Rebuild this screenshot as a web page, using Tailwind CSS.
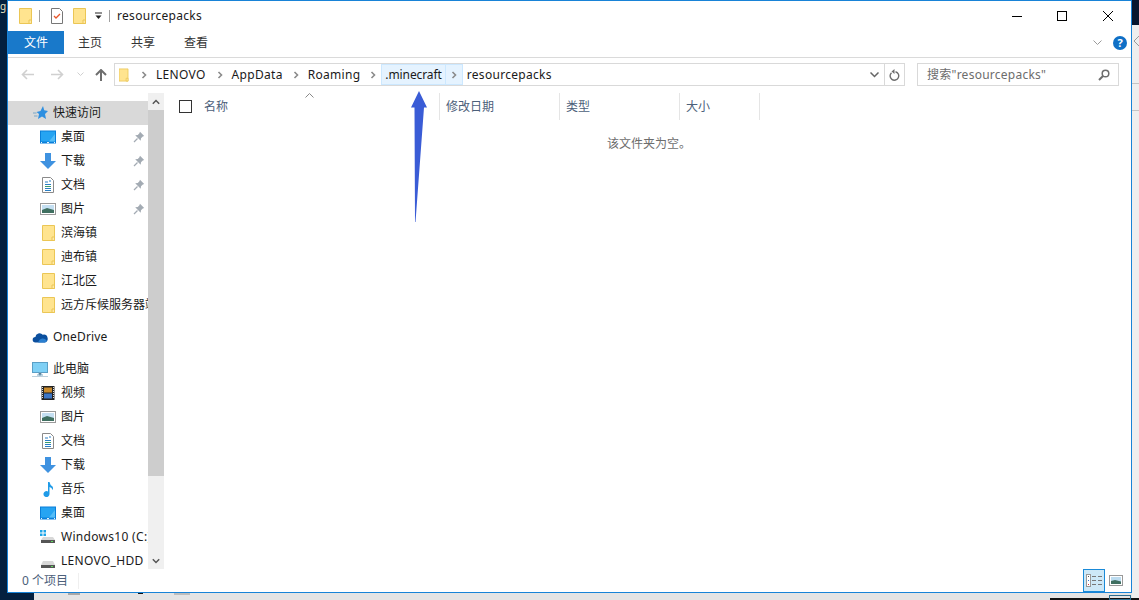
<!DOCTYPE html>
<html lang="zh-CN">
<head>
<meta charset="UTF-8">
<title>resourcepacks</title>
<script src="https://cdn.jsdelivr.net/npm/@tailwindcss/browser@4"></script>
</head>
<body class="relative w-[1139px] h-[600px] overflow-hidden bg-[#e4e4e4] font-['Noto_Sans','Noto_Sans_CJK_SC',sans-serif] text-[12px] leading-none text-[#1a1a1a]">

<svg class="hidden">
  <defs>
    <symbol id="folder" viewBox="0 0 16 16"><path d="M2.500.5h12v15h-12z" fill="#ffe48f" stroke="#ebc655"/><path d="M12 12h2.500v3.500H12z" fill="#ffe9a8" stroke="#ebc655"/></symbol>
    <symbol id="desk" viewBox="0 0 16 16"><rect x="0" y="1.500" width="16" height="13" fill="#0a7fd9"/><rect x="1" y="2.500" width="14" height="10" fill="#26a4f2"/><path d="M9 12.500 15 5v7.500z" fill="#55bdf7"/><path d="M1 13.600h1M7 13.600h2M14 13.600h1" stroke="#fff"/></symbol>
    <symbol id="down" viewBox="0 0 16 16"><path d="M5 0h6v8h5l-8 8-8-8h5z" fill="#3f92e0"/></symbol>
    <symbol id="doc" viewBox="0 0 16 16"><path d="M2.500.5h8l3 3v12h-11z" fill="#fff" stroke="#8a8a8a"/><path d="M5 5h3M9 4h2M5 7.500h6M5 11.500h6M5 13.500h6" stroke="#2a7fc4"/><path d="M5 9.500h6" stroke="#3d9d6a"/></symbol>
    <symbol id="pic" viewBox="0 0 16 16"><rect x=".5" y="2.500" width="15" height="11" fill="#fff" stroke="#9a9a9a"/><rect x="2" y="4" width="12" height="8" fill="#c4dff2"/><path d="M2 9l5-2 7 2v3H2z" fill="#3f6f60"/></symbol>
    <symbol id="pin" viewBox="0 0 12 12"><path d="M7 .8 11.200 5 9.800 5.600 8 7.200 7.700 9.800 2.200 4.300 4.800 4 6.400 2.200z" fill="#a3abb3"/><path d="M4.500 7.500 1 11" stroke="#a3abb3" stroke-width="1.300"/></symbol>
    <symbol id="drive" viewBox="0 0 16 16"><path d="M3 8h10l2 4v3H1v-3z" fill="#d8d8d8"/><rect x="1" y="12" width="14" height="3" fill="#555"/><rect x="11" y="13" width="2" height="1" fill="#5fdc5f"/></symbol>
    <symbol id="chev" viewBox="0 0 6 8"><path d="M1.500 1 4.500 4 1.500 7" fill="none" stroke="#8a8a8a" stroke-width="1.600"/></symbol>
  </defs>
</svg>

<!-- desktop behind the window -->
<div class="absolute left-0 top-0 w-[7px] h-[600px] bg-[#03203f]"></div>
<div class="absolute left-0 top-[593px] w-[34px] h-[7px] bg-[#03203f]"></div>
<div class="absolute left-0 top-[1px] text-[10px] text-[#e8e0c0]">g</div>
<div class="absolute left-[68px] top-[593px] w-[12px] h-[2px] bg-[#a8a8a8]"></div>
<div class="absolute left-[138px] top-[593px] w-[5px] h-[1px] bg-[#111]"></div>
<div class="absolute left-[174px] top-[593px] w-[16px] h-[2px] bg-[#bdbdbd]"></div>
<div class="absolute left-[1132px] top-0 w-[7px] h-[25px] bg-[#07162e]"></div>
<div class="absolute left-[1132px] top-[25px] w-[7px] h-[575px] bg-[#eeeeee]"></div>
<svg class="absolute left-[1132px] top-[36px] w-[7px] h-[10px]" viewBox="0 0 7 10"><path d="M7 0 2 5l5 5" fill="none" stroke="#9a9a9a"/></svg>
<div class="absolute left-[1132px] top-[83px] w-[7px] h-px bg-[#c4c4c4]"></div>
<div class="absolute left-[1132px] top-[110px] w-[7px] h-px bg-[#c4c4c4]"></div>
<div class="absolute left-[1050px] top-[598px] w-[89px] h-[2px] bg-[#111]"></div>
<div class="absolute left-[1109px] top-[595px] w-[22px] h-[5px] border border-[#2d6d8f]"></div>

<!-- explorer window -->
<div class="absolute left-[7px] top-0 w-[1125px] h-[593px] bg-white border border-[#1883d7] flex flex-col">

  <!-- title bar -->
  <div class="h-[30px] flex items-center shrink-0">
    <svg class="ml-[9px] w-4 h-4"><use href="#folder"/></svg>
    <div class="ml-[6px] w-px h-3 bg-[#a0a0a0]"></div>
    <svg class="ml-[10px] w-[14px] h-[16px]" viewBox="0 0 14 16"><path d="M1.500.5h8l3 3v12h-11z" fill="#fff" stroke="#777"/><path d="M4 8l2 2 4-4" fill="none" stroke="#e8562a" stroke-width="1.300"/></svg>
    <svg class="ml-[7px] w-4 h-4"><use href="#folder"/></svg>
    <svg class="ml-[7px] w-[9px] h-[8px]" viewBox="0 0 9 8"><path d="M1 1h7" stroke="#222"/><path d="M1.500 3.500h6L4.500 7z" fill="#222"/></svg>
    <div class="ml-[6px] w-px h-3 bg-[#a0a0a0]"></div>
    <span class="ml-[7px] tracking-[0.3px]">resourcepacks</span>
    <div class="ml-auto flex items-center">
      <svg class="w-[10px] h-[10px] mr-[35px]" viewBox="0 0 10 10"><path d="M0 5.500h10" stroke="#000"/></svg>
      <svg class="w-[10px] h-[10px] mr-[36px]" viewBox="0 0 10 10"><rect x=".5" y=".5" width="9" height="9" fill="none" stroke="#000"/></svg>
      <svg class="w-[10px] h-[10px] mr-[18px]" viewBox="0 0 10 10"><path d="M0 0l10 10M10 0 0 10" stroke="#000"/></svg>
    </div>
  </div>

  <!-- ribbon tabs -->
  <div class="h-[27px] shrink-0 border-b border-[#dadada] flex items-start">
    <div class="w-[56px] h-[23px] bg-[#1979ca] text-white flex items-center justify-center">文件</div>
    <div class="h-[23px] flex items-center ml-[14px] text-[#333]">主页</div>
    <div class="h-[23px] flex items-center ml-[29px] text-[#333]">共享</div>
    <div class="h-[23px] flex items-center ml-[29px] text-[#333]">查看</div>
    <div class="ml-auto h-[23px] flex items-center">
      <svg class="w-[9px] h-[6px] mr-[11px]" viewBox="0 0 9 6"><path d="M.5.500 4.500 4.500 8.500.5" fill="none" stroke="#9a9a9a"/></svg>
      <div class="w-[14px] h-[14px] mr-[4px] rounded-full bg-[#0f6fc6] text-white text-[11px] font-bold flex items-center justify-center">?</div>
    </div>
  </div>

  <!-- address row -->
  <div class="h-[33px] mb-[2px] shrink-0 flex items-center">
    <svg class="ml-[13px] w-[13px] h-[11px]" viewBox="0 0 13 11"><path d="M6 1 1.500 5.500 6 10M1.500 5.500H13" fill="none" stroke="#d0d0d0" stroke-width="1.600"/></svg>
    <svg class="ml-[17px] w-[13px] h-[11px]" viewBox="0 0 13 11"><path d="M7 1l4.500 4.500L7 10M11.500 5.500H0" fill="none" stroke="#d0d0d0" stroke-width="1.600"/></svg>
    <svg class="ml-[13px] w-[7px] h-[5px]" viewBox="0 0 7 5"><path d="M.5.500 3.500 3.500 6.500.5" fill="none" stroke="#d0d0d0"/></svg>
    <svg class="ml-[11px] w-[12px] h-[12px]" viewBox="0 0 12 12"><path d="M1 6l5-5 5 5M6 1v11" fill="none" stroke="#6e6e6e" stroke-width="2"/></svg>
    <div class="ml-[7px] w-[791px] h-[23px] border border-[#d9d9d9] flex items-center tracking-[0.3px]">
      <svg class="ml-[4px] w-[12px] h-[16px]" viewBox="2 0 13 16" preserveAspectRatio="none"><use href="#folder"/></svg>
      <svg class="ml-[10px] w-[6px] h-[8px]"><use href="#chev"/></svg>
      <span class="ml-[9px]">LENOVO</span>
      <svg class="ml-[11px] w-[6px] h-[8px]"><use href="#chev"/></svg>
      <span class="ml-[9px]">AppData</span>
      <svg class="ml-[10px] w-[6px] h-[8px]"><use href="#chev"/></svg>
      <span class="ml-[9px]">Roaming</span>
      <svg class="ml-[10px] w-[6px] h-[8px]"><use href="#chev"/></svg>
      <div class="ml-[5px] h-[21px] bg-[#e5f3ff] border border-[#cce8ff] flex items-center">
        <span class="px-[3px] tracking-[-0.1px]">.minecraft</span>
        <div class="h-full w-[17px] border-l border-[#cce8ff] flex items-center justify-center"><svg class="w-[6px] h-[8px]"><use href="#chev"/></svg></div>
      </div>
      <span class="ml-[4px]">resourcepacks</span>
      <svg class="ml-auto mr-[5px] w-[9px] h-[6px]" viewBox="0 0 9 6"><path d="M.5.500 4.500 4.500 8.500.5" fill="none" stroke="#666" stroke-width="1.500"/></svg>
      <div class="h-full w-[20px] border-l border-[#d9d9d9] flex items-center justify-center">
        <svg class="w-[11px] h-[12px]" viewBox="0 0 11 12"><path d="M6.500 2.700a4.300 4.300 0 1 1-4 1" fill="none" stroke="#6e6e6e" stroke-width="1.400"/><path d="M5.500 0v5L2.500 2.500z" fill="#6e6e6e"/></svg>
      </div>
    </div>
    <div class="ml-[12px] w-[202px] h-[23px] border border-[#d9d9d9] flex items-center">
      <span class="ml-[9px] text-[#6d6d6d] tracking-[0.25px]">搜索"resourcepacks"</span>
      <svg class="ml-auto mr-[8px] w-[12px] h-[12px]" viewBox="0 0 12 12"><circle cx="7.500" cy="4.500" r="3.300" fill="none" stroke="#6e6e6e" stroke-width="1.500"/><path d="M5 7 1 11" stroke="#6e6e6e" stroke-width="2"/></svg>
    </div>
  </div>

  <!-- navigation pane + file list -->
  <div class="flex-1 min-h-0 flex">
    <div class="w-[140px] shrink-0 pt-2 overflow-hidden whitespace-nowrap">
      <div class="h-6 flex items-center pl-[25px] bg-[#d9d9d9]">
        <svg class="w-[15px] h-[14px]" viewBox="0 0 15 14"><path d="M10 0l1.200 4.300L15 5l-3 3 1 5-4-2.500L5 13l1-5-2.500-2 4-1z" fill="#2e8fe0"/><path d="M0 7h3.500M1 10h3.500" stroke="#7aa7c7"/></svg>
        <span class="ml-[5px]">快速访问</span>
      </div>
      <div class="h-6 flex items-center pl-[32px]"><svg class="w-4 h-4"><use href="#desk"/></svg><span class="ml-[5px]">桌面</span><svg class="ml-auto mr-[3px] w-3 h-3"><use href="#pin"/></svg></div>
      <div class="h-6 flex items-center pl-[32px]"><svg class="w-4 h-4"><use href="#down"/></svg><span class="ml-[5px]">下载</span><svg class="ml-auto mr-[3px] w-3 h-3"><use href="#pin"/></svg></div>
      <div class="h-6 flex items-center pl-[32px]"><svg class="w-4 h-4"><use href="#doc"/></svg><span class="ml-[5px]">文档</span><svg class="ml-auto mr-[3px] w-3 h-3"><use href="#pin"/></svg></div>
      <div class="h-6 flex items-center pl-[32px]"><svg class="w-4 h-4"><use href="#pic"/></svg><span class="ml-[5px]">图片</span><svg class="ml-auto mr-[3px] w-3 h-3"><use href="#pin"/></svg></div>
      <div class="h-6 flex items-center pl-[32px]"><svg class="w-4 h-4"><use href="#folder"/></svg><span class="ml-[5px]">滨海镇</span></div>
      <div class="h-6 flex items-center pl-[32px]"><svg class="w-4 h-4"><use href="#folder"/></svg><span class="ml-[5px]">迪布镇</span></div>
      <div class="h-6 flex items-center pl-[32px]"><svg class="w-4 h-4"><use href="#folder"/></svg><span class="ml-[5px]">江北区</span></div>
      <div class="h-6 flex items-center pl-[32px]"><svg class="w-4 h-4 shrink-0"><use href="#folder"/></svg><span class="ml-[5px]">远方斥候服务器端</span></div>

      <div class="h-6 mt-2 flex items-center pl-[24px]">
        <svg class="w-4 h-[11px]" viewBox="0 0 16 12"><path d="M3 11.500a3 3 0 0 1 0-6 4.500 4.500 0 0 1 8-2.500 3.500 3.500 0 0 1 2 8.500z" fill="#0b4f9e"/><path d="M6 11.500q1-4 4.500-4.500 3-.3 5 2.500-.2 2-2 2z" fill="#2a7fd0"/></svg>
        <span class="ml-[5px] tracking-[0.15px]">OneDrive</span>
      </div>

      <div class="h-6 mt-2 flex items-center pl-[24px]">
        <svg class="w-4 h-4" viewBox="0 0 16 16"><rect x=".5" y="1.500" width="15" height="10" fill="#7fd0f5" stroke="#5a9fc6"/><path d="M5 14h6M7 12h2v2H7z" stroke="#7fa9c4"/><path d="M0 15.500h16" stroke="#bcd0dc"/></svg>
        <span class="ml-[5px]">此电脑</span>
      </div>
      <div class="h-6 flex items-center pl-[32px]"><svg class="w-4 h-4" viewBox="0 0 16 16"><rect x="1.500" y="1" width="13" height="14" fill="#222"/><rect x="4" y="2.500" width="8" height="5" fill="#c98a2c"/><rect x="4" y="8.500" width="8" height="5" fill="#3c75c4"/><path d="M2.500 2v12M13.500 2v12" stroke="#ddd" stroke-dasharray="1 1"/></svg><span class="ml-[5px]">视频</span></div>
      <div class="h-6 flex items-center pl-[32px]"><svg class="w-4 h-4"><use href="#pic"/></svg><span class="ml-[5px]">图片</span></div>
      <div class="h-6 flex items-center pl-[32px]"><svg class="w-4 h-4"><use href="#doc"/></svg><span class="ml-[5px]">文档</span></div>
      <div class="h-6 flex items-center pl-[32px]"><svg class="w-4 h-4"><use href="#down"/></svg><span class="ml-[5px]">下载</span></div>
      <div class="h-6 flex items-center pl-[32px]"><svg class="w-4 h-4" viewBox="0 0 16 16"><path d="M8 1h1.500q.5 3 3 4.500 1 1.500 0 3.500-.5-2.500-3-3V13a3 3 0 1 1-1.500-2.500z" fill="#1f9be8"/></svg><span class="ml-[5px]">音乐</span></div>
      <div class="h-6 flex items-center pl-[32px]"><svg class="w-4 h-4"><use href="#desk"/></svg><span class="ml-[5px]">桌面</span></div>
      <div class="h-6 flex items-center pl-[32px]"><svg class="w-4 h-4 shrink-0" viewBox="0 0 16 16"><path d="M0 1h2.500v2.500H0zM3.500 1H6v2.500H3.500zM0 4.500h2.500V7H0zM3.500 4.500H6V7H3.500z" fill="#1fa5e8"/><path d="M3 8h10l2 3v3H1v-3z" fill="#d8d8d8"/><rect x="1" y="11" width="14" height="3" fill="#555"/><rect x="11" y="12" width="2" height="1" fill="#5fdc5f"/></svg><span class="ml-[5px] tracking-[0.3px]">Windows10 (C:)</span></div>
      <div class="h-6 flex items-center pl-[32px]"><svg class="w-4 h-4 shrink-0"><use href="#drive"/></svg><span class="ml-[5px] tracking-[0.3px]">LENOVO_HDD</span></div>
    </div>

    <!-- nav scrollbar -->
    <div class="w-[16px] shrink-0 bg-[#f0f0f0] flex flex-col">
      <div class="h-[17px] flex items-center justify-center"><svg class="w-[8px] h-[6px]" viewBox="0 0 8 6"><path d="M.8 4.800 4 1.500l3.200 3.300" fill="none" stroke="#555" stroke-width="1.500"/></svg></div>
      <div class="h-[366px] bg-[#cdcdcd]"></div>
      <div class="flex-1 flex items-end justify-center pb-[5px]"><svg class="w-[8px] h-[6px]" viewBox="0 0 8 6"><path d="M.8 1.200 4 4.500l3.200-3.300" fill="none" stroke="#555" stroke-width="1.500"/></svg></div>
    </div>

    <!-- file list -->
    <div class="flex-1 min-w-0 flex flex-col">
      <div class="h-[27px] flex text-[#4c607a] shrink-0">
        <div class="relative w-[276px] flex items-center pl-[15px] border-r border-[#e5e5e5]">
          <div class="w-[13px] h-[13px] border border-[#333] bg-white"></div>
          <span class="ml-[12px]">名称</span>
          <svg class="absolute left-[141px] top-0 w-[9px] h-[5px]" viewBox="0 0 9 5"><path d="M.5 4.500l4-4 4 4" fill="none" stroke="#888"/></svg>
        </div>
        <div class="w-[120px] flex items-center pl-[6px] border-r border-[#e5e5e5]">修改日期</div>
        <div class="w-[120px] flex items-center pl-[6px] border-r border-[#e5e5e5]">类型</div>
        <div class="w-[80px] flex items-center pl-[6px] border-r border-[#e5e5e5]">大小</div>
      </div>
      <div class="pt-[18px] pl-[443px] text-[#6d6d6d]">该文件夹为空。</div>
    </div>
  </div>

  <!-- status bar -->
  <div class="h-[23px] shrink-0 flex items-center text-[#4c607a]">
    <span class="ml-[14px]">0 个项目</span>
    <div class="ml-[10px] w-px h-[16px] bg-[#efefef]"></div>
    <div class="ml-auto w-[22px] h-[23px] bg-[#cde8f7] border border-[#1a8ad8] flex items-center justify-center">
      <svg class="w-[16px] h-[13px]" viewBox="0 0 16 13"><rect x=".5" y=".5" width="4" height="12" fill="#fff" stroke="#999"/><path d="M2 2h1v1H2z" fill="#555"/><path d="M2 6h1v1H2z" fill="#3c75c4"/><path d="M2 10h1v1H2z" fill="#d33"/><path d="M6 2.500h4M12 2.500h4M6 6.500h4M12 6.500h4M6 10.500h4M12 10.500h4" stroke="#777"/></svg>
    </div>
    <svg class="ml-[4px] mr-[8px] w-[14px] h-[11px]" viewBox="0 0 14 11"><rect x=".5" y=".5" width="13" height="10" fill="#fff" stroke="#999"/><rect x="2" y="2" width="10" height="7" fill="#bcdcf0"/><path d="M2 6l4-1 6 1.500V9H2z" fill="#3f6f60"/></svg>
  </div>
</div>

<!-- arrow drawn over the screenshot -->
<svg class="absolute left-[405px] top-[85px] w-[30px] h-[140px]" viewBox="0 0 30 140"><path d="M14 6 22 22.500H19L10.500 137 10 137 9.500 22.500H6z" fill="#3a5cd6"/></svg>

</body>
</html>
